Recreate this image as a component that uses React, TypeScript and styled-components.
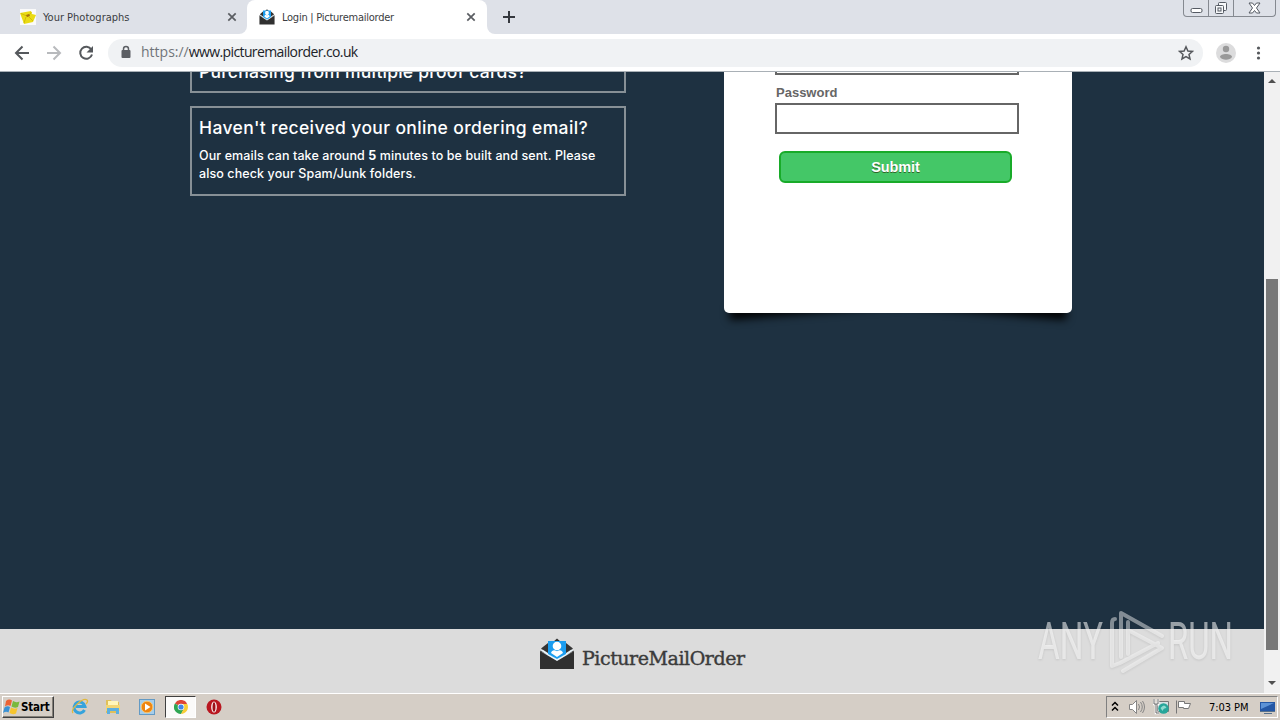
import * as React from 'react'
import styled, { createGlobalStyle } from 'styled-components'

const GlobalStyle = createGlobalStyle`
  * {
    box-sizing: border-box;
  }
  body {
    margin: 0;
    overflow: hidden;
    font-family: 'DejaVu Sans Condensed', 'DejaVu Sans', sans-serif;
  }
  svg {
    display: block;
    flex: none;
  }
`
const Screen = styled.div`
  position: relative;
  display: flex;
  flex-direction: column;
  width: 1280px;
  height: 720px;
  overflow: hidden;
`
const TabStrip = styled.div`
  display: flex;
  height: 34px;
  flex: none;
  background: #dee1e8;
`
const Tab = styled.div<{ $active?: boolean }>`
  display: flex;
  align-items: center;
  width: ${props => (props.$active ? 240 : 247)}px;
  padding: 0 ${props => (props.$active ? 11 : 10)}px 0 ${props => (props.$active ? 12 : 20)}px;
  border-radius: ${props => (props.$active ? '8px 8px 0 0' : '0 0 8px 0')};
  background: ${props => (props.$active ? '#fff' : '#dee1e8')};
`
const TabBacking = styled.div`
  display: flex;
  background: linear-gradient(#dee1e8 50%, #fff 50%);
`
const TabTitle = styled.span<{ $spacing: number }>`
  flex: 1;
  margin-left: 7px;
  padding-top: 2px;
  font-size: 11px;
  line-height: 16px;
  letter-spacing: ${props => props.$spacing}px;
  white-space: nowrap;
  color: #3b3d42;
`
const NewTabBacking = styled.div`
  display: flex;
  flex: 1;
  background: linear-gradient(#dee1e8 50%, #fff 50%);
`
const NewTab = styled.div`
  display: flex;
  flex: 1;
  align-items: center;
  padding-left: 15px;
  border-radius: 0 0 0 8px;
  background: #dee1e8;
`
const WindowButtons = styled.div`
  display: flex;
  width: 93px;
  height: 17px;
  margin-right: 4px;
  border: 1px solid #858990;
  border-top: 0;
  border-radius: 0 0 4px 4px;
`
const WindowButton = styled.div<{ $width: number }>`
  display: flex;
  align-items: center;
  justify-content: center;
  width: ${props => props.$width}px;
  border-right: 1px solid #858990;
  &:last-child {
    border-right: 0;
  }
`
const Toolbar = styled.div`
  display: flex;
  align-items: center;
  flex: none;
  height: 38px;
  padding-left: 14px;
  border-bottom: 1px solid #a9b0b6;
  background: #fff;
`
const NavButtons = styled.div`
  display: flex;
  flex: none;
  gap: 16px;
  width: 94px;
`
const Omnibox = styled.div`
  display: flex;
  align-items: center;
  flex: none;
  width: 1095px;
  height: 28px;
  padding: 0 9px 0 12px;
  border-radius: 14px;
  background: #f0f2f4;
`
const Url = styled.span`
  flex: 1;
  margin: -2px 0 0 9px;
  font: 14px/20px 'Open Sans', sans-serif;
  letter-spacing: -0.61px;
  color: #202328;
`
const Scheme = styled.span`
  letter-spacing: 0;
  color: #70757a;
`
const ToolbarEnd = styled.div`
  display: flex;
  align-items: center;
  gap: 12px;
  margin-left: 12px;
`
const Viewport = styled.div`
  display: flex;
  height: 621px;
  flex: none;
`
const Page = styled.div`
  display: flex;
  flex-direction: column;
  width: 1264px;
  background: #1e3141;
`
const Content = styled.main`
  display: flex;
  align-items: flex-start;
  height: 557px;
  padding-left: 190px;
  overflow: hidden;
`
const Help = styled.section`
  display: flex;
  flex-direction: column;
  gap: 13px;
  width: 436px;
  margin-top: -22px;
  color: #fff;
`
const HelpBox = styled.article<{ $height: number }>`
  height: ${props => props.$height}px;
  padding: 7px 7px;
  border: 2px solid #879096;
  font-family: Inter, sans-serif;
`
const HelpTitle = styled.h2<{ $spacing: number }>`
  margin: 0 0 6px;
  font-size: 17.5px;
  line-height: 26px;
  font-weight: 500;
  letter-spacing: ${props => props.$spacing}px;
  white-space: nowrap;
`
const HelpText = styled.p`
  margin: 0;
  font-size: 12.5px;
  line-height: 18px;
  font-weight: 500;
  letter-spacing: 0.1px;
  white-space: nowrap;
`
const Card = styled.form`
  position: relative;
  z-index: 0;
  width: 348px;
  height: 261px;
  margin: -20px 0 0 98px;
  &::before,
  &::after {
    content: '';
    position: absolute;
    z-index: -2;
    bottom: 16px;
    left: 4px;
    width: 50%;
    height: 12px;
    box-shadow: 0 16px 8px #000;
    transform: rotate(-4.5deg);
  }
  &::after {
    right: 4px;
    left: auto;
    transform: rotate(4.5deg);
  }
`
const CardBody = styled.div`
  display: flex;
  flex-direction: column;
  height: 100%;
  padding: 0 0 0 51px;
  border-radius: 5px;
  background: #fff;
`
const Field = styled.input`
  width: 244px;
  height: 31px;
  flex: none;
  padding: 0 6px;
  border: 2px solid #666;
  border-radius: 0;
  background: #fff;
`
const FirstField = styled(Field)`
  margin-top: -8px;
`
const Label = styled.label`
  margin: 9px 0 2px 1px;
  font: bold 13px/17px 'Liberation Sans', Arial, sans-serif;
  color: #666;
`
const Submit = styled.button`
  width: 233px;
  height: 32px;
  margin: 17px 0 0 4px;
  padding: 0;
  border: 2px solid #18ab29;
  border-radius: 6px;
  background: #44c767;
  color: #fff;
  font: bold 14.5px/26px 'Liberation Sans', Arial, sans-serif;
  letter-spacing: -0.1px;
  text-shadow: 0 1px 0 #2f6627;
`
const Footer = styled.footer`
  display: flex;
  height: 64px;
  padding: 9px 0 0 539px;
  background: #dcdcdc;
`
const Brand = styled.span`
  margin: 6px 0 0 7px;
  font: 19px/28px 'DejaVu Serif', serif;
  letter-spacing: -0.45px;
  -webkit-text-stroke: 0.4px #3b3b3b;
  color: #3b3b3b;
`
const Scrollbar = styled.div`
  display: flex;
  flex-direction: column;
  align-items: center;
  justify-content: space-between;
  width: 16px;
  padding: 7px 0 8px;
  background: #f1f1f1;
`
const Thumb = styled.div`
  width: 12px;
  height: 371px;
  margin-top: 165px;
  background: #787878;
`
const Arrow = styled.i<{ $down?: boolean }>`
  border: 4px solid transparent;
  border-top: ${props => (props.$down ? '4px solid #505050' : '0')};
  border-bottom: ${props => (props.$down ? '0' : '4px solid #505050')};
`
const Watermark = styled.svg`
  position: absolute;
  left: 1030px;
  top: 604px;
  font-family: Roboto, sans-serif;
  filter: drop-shadow(0 1px 1px rgba(0, 0, 0, 0.18));
`
const Taskbar = styled.div`
  display: flex;
  align-items: center;
  flex: 1;
  padding: 2px 2px 2px;
  border-top: 1px solid #fff;
  background: #d5cec6;
`
const StartButton = styled.div`
  display: flex;
  align-items: center;
  gap: 1px;
  width: 52px;
  height: 22px;
  padding-left: 0;
  border: 1px solid;
  border-color: #fff #404040 #404040 #fff;
  box-shadow: inset -1px -1px #858078;
  font: bold 11.5px/18px 'DejaVu Sans Condensed', 'DejaVu Sans', sans-serif;
  letter-spacing: -0.2px;
  color: #000;
`
const QuickLaunch = styled.div`
  display: flex;
  align-items: center;
  flex: 1;
  padding-left: 9px;
`
const TaskItem = styled.div<{ $pressed?: boolean }>`
  display: flex;
  align-items: center;
  justify-content: center;
  width: ${props => (props.$pressed ? 31 : 33.5)}px;
  height: 22px;
  margin: 0 ${props => (props.$pressed ? 1.5 : 0)}px;
  border: ${props => (props.$pressed ? '1px solid' : '0')};
  border-color: #404040 #fff #fff #404040;
  background: ${props => (props.$pressed ? '#fbfaf9' : 'transparent')};
`
const Tray = styled.div`
  display: flex;
  align-items: center;
  width: 172px;
  height: 22px;
  padding-left: 4px;
  border: 1px solid;
  border-color: #808080 #fff #fff #808080;
`
const Clock = styled.span`
  width: 51px;
  margin-left: 16px;
  font-size: 11px;
  letter-spacing: -0.05px;
  white-space: nowrap;
  color: #000;
`

const CloseIcon = () => (
  <svg width="10" height="10" viewBox="0 0 10 10">
    <path d="M1.3 1.3l7.4 7.4M8.7 1.3L1.3 8.7" stroke="#5a5d62" strokeWidth="1.7" />
  </svg>
)

const EnvelopeIcon = ({ width, height }: { width: number; height: number }) => (
  <svg width={width} height={height} viewBox="0 0 36 32" preserveAspectRatio="none">
    <path d="M14 4l4-3.5L22 4zM1 13l8-6v10zM35 13l-8-6v10z" fill="#333" />
    <path d="M1 12l8-2h18l8 2-17 12z" fill="#e9f3f8" />
    <path d="M2 10.5L9 5v10zM34 10.5L27 5v10z" fill="#353535" />
    <path d="M9 3h18v13l-9 5-9-5z" fill="#1b9df0" />
    <circle cx="18" cy="8" r="4.3" fill="#fff" />
    <path d="M12 15c1-3 3-3.5 6-1.8 3-1.7 5-1.2 6 1.8l-6 4z" fill="#fff" />
    <path d="M1 13l17 10 17-10v18H1z" fill="#303030" />
  </svg>
)

const PhotoIcon = () => (
  <svg width="16" height="16" viewBox="0 0 16 16">
    <path d="M0 0h16v16H0z" fill="#fafafa" />
    <path d="M0 4l11-2 1 3 4 1-3 7-9 2z" fill="#eadb13" />
    <path d="M1 4.500l7 3 3.500-4.500M4 14l2-6M9 8l4 4" fill="none" stroke="#d1bd08" />
    <path d="M6 6l3-1 1 2-3 1z" fill="#a8720b" />
  </svg>
)

const NavIcons = () => (
  <NavButtons>
    <svg width="16" height="16" viewBox="0 0 16 16" fill="none" stroke="#55585c" strokeWidth="2">
      <path d="M15 8H2.5M8.5 1.5L2 8l6.5 6.5" />
    </svg>
    <svg width="16" height="16" viewBox="0 0 16 16" fill="none" stroke="#b8babd" strokeWidth="2">
      <path d="M1 8h12.500M7.500 1.500L14 8l-6.500 6.500" />
    </svg>
    <svg width="16" height="16" viewBox="0 0 16 16">
      <path d="M13.300 4.500A6 6 0 1 0 14 9.500" fill="none" stroke="#55585c" strokeWidth="2" />
      <path d="M15 1v6.500H8.500z" fill="#55585c" />
    </svg>
  </NavButtons>
)

const WindowControls = () => (
  <WindowButtons>
    <WindowButton $width={25}>
      <svg width="13" height="17" viewBox="0 0 13 17">
        <rect x="1" y="8.500" width="11" height="4" rx="1.500" fill="#fff" stroke="#555a63" />
      </svg>
    </WindowButton>
    <WindowButton $width={25}>
      <svg width="14" height="15" viewBox="0 0 14 15" fill="#f7f8fa" stroke="#555a63">
        <rect x="4.500" y="1.500" width="8" height="8" rx="1" />
        <rect x="1.500" y="4.500" width="8" height="8" rx="1" />
        <rect x="4" y="7" width="3" height="3" />
      </svg>
    </WindowButton>
    <WindowButton $width={41}>
      <svg width="13" height="12" viewBox="0 0 13 12" fill="#fff" stroke="#555a63">
        <path d="M1 1h3.500l2 2.500 2-2.500H12L8.500 6l3.500 5H8.500l-2-2.500-2 2.500H1l3.500-5z" />
      </svg>
    </WindowButton>
  </WindowButtons>
)

const BrowserToolbar = () => (
  <Toolbar>
    <NavIcons />
    <Omnibox>
      <svg width="12" height="16" viewBox="0 0 12 16">
        <path d="M3.500 6V4a2.500 2.500 0 0 1 5 0v2" fill="none" stroke="#5c5f64" strokeWidth="1.500" />
        <rect x="1.500" y="5" width="9" height="8" rx="1" fill="#5c5f64" />
      </svg>
      <Url>
        <Scheme>https://</Scheme>www.picturemailorder.co.uk
      </Url>
      <svg width="16" height="16" viewBox="0 0 16 16">
        <path
          d="M8 1.800l1.900 4.200 4.500.4L11 9.400l1 4.500-4-2.400-4 2.400 1-4.500-3.400-3 4.500-.4z"
          fill="none"
          stroke="#55585c"
          strokeWidth="1.500"
        />
      </svg>
    </Omnibox>
    <ToolbarEnd>
      <svg width="22" height="22" viewBox="0 0 22 22">
        <circle cx="11" cy="11" r="10" fill="#dcdcdd" />
        <circle cx="11" cy="7" r="3.200" fill="#999" />
        <path d="M5 15c0-4 12-4 12 0-2 3.500-10 3.500-12 0z" fill="#999" />
      </svg>
      <svg width="20" height="18" viewBox="0 0 20 18" fill="#55585c">
        <circle cx="9.500" cy="4" r="1.600" />
        <circle cx="9.500" cy="9" r="1.600" />
        <circle cx="9.500" cy="14" r="1.600" />
      </svg>
    </ToolbarEnd>
  </Toolbar>
)

const AnyRunMark = () => (
  <Watermark width="210" height="76" viewBox="0 0 210 76">
    <g fill="#fff" fillOpacity="0.55" fontSize="52" fontWeight="400">
      <text x="8" y="55" textLength="65" lengthAdjust="spacingAndGlyphs">
        ANY
      </text>
      <text x="138" y="55" textLength="65" lengthAdjust="spacingAndGlyphs">
        RUN
      </text>
    </g>
    <path
      d="M85 15q-3 0-3 4v43l8-3 38-20M91 53V9l41 23M98 50V18M98 26l34 18-39 23"
      fill="none"
      stroke="#fff"
      strokeLinecap="round"
      strokeLinejoin="round"
      strokeOpacity="0.45"
      strokeWidth="4"
    />
  </Watermark>
)

const QuickLaunchIcons = () => (
  <QuickLaunch>
    <TaskItem>
      <svg width="18" height="18" viewBox="0 0 18 18" fill="none">
        <path d="M13.500 12A5.500 5.500 0 1 1 14 8.500H5" stroke="#35a3dc" strokeWidth="3" />
        <path d="M2 15C-1 11 12-1 16 2c1 1 0 3-1 4" stroke="#e0b83d" strokeWidth="1.300" />
      </svg>
    </TaskItem>
    <TaskItem>
      <svg width="16" height="16" viewBox="0 0 16 16">
        <path d="M1 1h5l1 2h7v11H1z" fill="#e0c05a" />
        <path d="M3 2h10v5H3z" fill="#fff6ba" />
        <path d="M1 6h14v6H1z" fill="#f2d675" />
        <path d="M2 15V9h12v6h-3v-3H5v3z" fill="#5cafe0" />
      </svg>
    </TaskItem>
    <TaskItem>
      <svg width="16" height="16" viewBox="0 0 16 16">
        <rect x=".5" y=".5" width="15" height="15" fill="#a6cdea" stroke="#639ac4" />
        <circle cx="8" cy="8" r="5.800" fill="#ee8511" stroke="#f9c46c" />
        <path d="M6 4.500L11.500 8 6 11.500z" fill="#fff" />
      </svg>
    </TaskItem>
    <TaskItem $pressed>
      <svg width="14" height="14" viewBox="0 0 14 14">
        <path d="M7 7L.9 3.500A7 7 0 0 1 13.100 3.500z" fill="#df4436" />
        <path d="M7 7L.9 3.500A7 7 0 0 0 7 14l3-5z" fill="#30a653" />
        <path d="M7 4h6.300A7 7 0 0 1 7 14l3-6z" fill="#f8cd37" />
        <circle cx="7" cy="7" r="3.300" fill="#fff" />
        <circle cx="7" cy="7" r="2.600" fill="#4285e8" />
      </svg>
    </TaskItem>
    <TaskItem>
      <svg width="16" height="16" viewBox="0 0 16 16">
        <circle cx="8" cy="8" r="7.500" fill="#b91720" />
        <ellipse cx="8" cy="8" rx="2.800" ry="5.500" fill="#fff" />
        <ellipse cx="8" cy="8" rx="1.500" ry="4.800" fill="#9d1119" />
      </svg>
    </TaskItem>
  </QuickLaunch>
)

const SystemTray = () => (
  <Tray>
    <svg width="8" height="14" viewBox="0 0 8 14" fill="none" stroke="#000" strokeWidth="1.500">
      <path d="M1 5.500L4 2.500l3 3M1 10.500l3-3 3 3" />
    </svg>
    <svg width="34" height="18" viewBox="0 0 34 18" fill="none" stroke="#858585">
      <path d="M10.500 6.500h3l4-4v13l-4-4h-3z" fill="#fff" />
      <path d="M19.500 6q2 3 0 6M21.500 4q3.500 5 0 10M23.500 3q4 6 0 12" />
    </svg>
    <svg width="17" height="18" viewBox="0 0 17 18">
      <path d="M4.500 3.500h11v10h-11z" fill="#d8e1e3" stroke="#777" />
      <path d="M1 1v5h4V1M3 6v9h3" fill="none" stroke="#fff" strokeWidth="2.500" />
      <path d="M1 1v5h4V1M3 6v9h3" fill="none" stroke="#666" />
      <circle cx="10.500" cy="10.500" r="5.200" fill="#27a69a" />
      <path d="M7.500 10q4-5 6 0-3 0-4 3z" fill="#8edbd0" />
    </svg>
    <svg width="23" height="18" viewBox="0 0 23 18" fill="#fff" stroke="#777">
      <path d="M6.500 2.500v13" />
      <path d="M8.500 3.500h6v2h6l-2 5h-5v-1h-5z" />
    </svg>
    <Clock>7:03 PM</Clock>
    <svg width="16" height="15" viewBox="0 0 16 15">
      <path d="M0 2h15v9H0z" fill="#2457a5" />
      <path d="M1 3h13L1 9z" fill="#5c92d6" />
      <path d="M0 11h15v1H0zM4 13h8v1H4z" fill="#57718c" />
    </svg>
  </Tray>
)

const App = () => (
  <Screen>
    <GlobalStyle />
    <TabStrip>
      <TabBacking>
        <Tab>
          <PhotoIcon />
          <TabTitle $spacing={0}>Your Photographs</TabTitle>
          <CloseIcon />
        </Tab>
        <Tab $active>
          <EnvelopeIcon width={16} height={16} />
          <TabTitle $spacing={-0.25}>Login | Picturemailorder</TabTitle>
          <CloseIcon />
        </Tab>
      </TabBacking>
      <NewTabBacking>
        <NewTab>
          <svg width="14" height="14" viewBox="0 0 14 14">
            <path d="M7 1v12M1 7h12" stroke="#35383e" strokeWidth="2" />
          </svg>
        </NewTab>
      </NewTabBacking>
      <WindowControls />
    </TabStrip>
    <BrowserToolbar />
    <Viewport>
      <Page>
        <Content>
          <Help>
            <HelpBox $height={43}>
              <HelpTitle $spacing={0.22}>Purchasing from multiple proof cards?</HelpTitle>
            </HelpBox>
            <HelpBox $height={90}>
              <HelpTitle $spacing={0.36}>Haven't received your online ordering email?</HelpTitle>
              <HelpText>
                Our emails can take around <b>5</b> minutes to be built and sent. Please
                <br />
                also check your Spam/Junk folders.
              </HelpText>
            </HelpBox>
          </Help>
          <Card>
            <CardBody>
              <FirstField aria-label="Username" />
              <Label htmlFor="password">Password</Label>
              <Field id="password" type="password" />
              <Submit type="button">Submit</Submit>
            </CardBody>
          </Card>
        </Content>
        <Footer>
          <EnvelopeIcon width={36} height={32} />
          <Brand>PictureMailOrder</Brand>
        </Footer>
      </Page>
      <Scrollbar>
        <Arrow />
        <Thumb />
        <Arrow $down />
      </Scrollbar>
    </Viewport>
    <Taskbar>
      <StartButton>
        <svg width="17" height="16" viewBox="0 0 17 16">
          <path d="M3 2q3-2.500 6-.5L7.500 7Q5 5.500 2 7.500z" fill="#ed6335" />
          <path d="M10 2q3 2 6.500.5L15 8q-3.500 1.500-6.500-.5z" fill="#79b93d" />
          <path d="M1.500 8.500q3-2 5.500-.5L5.500 13.500Q3 12 0 14z" fill="#3b92d5" />
          <path d="M8 8.500q3 2 6.500.500L13 14.500q-3.500 1.500-6.500-.5z" fill="#f7c52e" />
        </svg>
        Start
      </StartButton>
      <QuickLaunchIcons />
      <SystemTray />
    </Taskbar>
    <AnyRunMark />
  </Screen>
)

export default App
